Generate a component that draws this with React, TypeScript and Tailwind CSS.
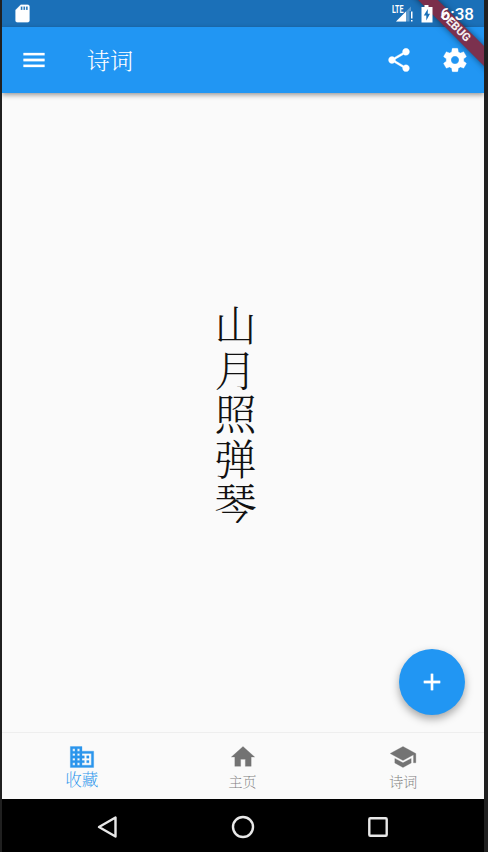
import React from "react";

const PATHS = {
  menu: "M3 18h18v-2H3v2zm0-5h18v-2H3v2zm0-7v2h18V6H3z",
  share:
    "M18 16.08c-.76 0-1.44.3-1.96.77L8.91 12.7c.05-.23.09-.46.09-.7s-.04-.47-.09-.7l7.05-4.11c.54.5 1.25.81 2.04.81 1.66 0 3-1.34 3-3s-1.34-3-3-3-3 1.34-3 3c0 .24.04.47.09.7L8.04 9.81C7.5 9.31 6.79 9 6 9c-1.66 0-3 1.34-3 3s1.34 3 3 3c.79 0 1.5-.31 2.04-.81l7.12 4.16c-.05.21-.08.43-.08.65 0 1.61 1.31 2.92 2.92 2.92s2.92-1.31 2.92-2.92-1.31-2.92-2.92-2.92z",
  settings:
    "M19.43 12.98c.04-.32.07-.64.07-.98s-.03-.66-.07-.98l2.11-1.65c.19-.15.24-.42.12-.64l-2-3.46c-.12-.22-.39-.3-.61-.22l-2.49 1c-.52-.4-1.08-.73-1.69-.98l-.38-2.65C14.46 2.18 14.25 2 14 2h-4c-.25 0-.46.18-.49.42l-.38 2.65c-.61.25-1.17.59-1.69.98l-2.49-1c-.23-.09-.49 0-.61.22l-2 3.46c-.13.22-.07.49.12.64l2.11 1.65c-.04.32-.07.65-.07.98s.03.66.07.98l-2.11 1.65c-.19.15-.24.42-.12.64l2 3.46c.12.22.39.3.61.22l2.49-1c.52.4 1.08.73 1.69.98l.38 2.65c.03.24.24.42.49.42h4c.25 0 .46-.18.49-.42l.38-2.65c.61-.25 1.17-.59 1.69-.98l2.49 1c.23.09.49 0 .61-.22l2-3.46c.12-.22.07-.49-.12-.64l-2.11-1.65zM12 15.5c-1.93 0-3.5-1.57-3.5-3.5s1.57-3.5 3.5-3.5 3.5 1.57 3.5 3.5-1.57 3.5-3.5 3.5z",
  add: "M19 13h-6v6h-2v-6H5v-2h6V5h2v6h6v2z",
  business:
    "M12 7V3H2v18h20V7H12zM6 19H4v-2h2v2zm0-4H4v-2h2v2zm0-4H4V9h2v2zm0-4H4V5h2v2zm4 12H8v-2h2v2zm0-4H8v-2h2v2zm0-4H8V9h2v2zm0-4H8V5h2v2zm10 12h-8v-2h2v-2h-2v-2h2v-2h-2V9h8v10zm-2-8h-2v2h2v-2zm0 4h-2v2h2v-2z",
  home: "M10 20v-6h4v6h5v-8h3L12 3 2 12h3v8z",
  school: "M5 13.18v4L12 21l7-3.82v-4L12 17l-7-3.82zM12 3L1 9l11 6 9-4.91V17h2V9L12 3z",
  sd: "M18 2h-8L4.02 8 4 20c0 1.1.9 2 2 2h12c1.1 0 2-.9 2-2V4c0-1.100-.9-2-2-2zm-6 6h-2V4h2v4zm3 0h-2V4h2v4zm3 0h-2V4h2v4z",
};

function Icon({ name, className }: { name: keyof typeof PATHS; className: string }) {
  return (
    <svg viewBox="0 0 24 24" fill="currentColor" stroke="currentColor" strokeWidth="0.25" className={className}>
      <path d={PATHS[name]} />
    </svg>
  );
}

function StatusBar() {
  return (
    <div className="flex h-[27px] shrink-0 items-center bg-[#1b70b8] pl-[10px] text-white">
      <Icon name="sd" className="h-[21px] w-[21px]" />
      <div className="relative z-30 ml-auto flex items-center pr-[10px]">
        <svg viewBox="0 0 22 20" className="h-5 w-[22px]">
          <path d="M4 17.500L19 2.500v15z" fill="#fff" fillOpacity=".3" />
          <path d="M4 17.500L14 7.500v10z" fill="#fff" />
          <path d="M17.500 7h3.500v12h-3.500z" fill="#1b70b8" />
          <path d="M19 7.500h1.500v7H19zm0 8.500h1.500v1.500H19z" fill="#fff" />
          <text x="0" y="8.500" fill="#fff" fontFamily="Roboto, sans-serif" fontSize="10.500" fontWeight="700" textLength="11.500" lengthAdjust="spacingAndGlyphs">
            LTE
          </text>
        </svg>
        <svg viewBox="0 0 12 18" className="mr-px ml-[7px] h-[18px] w-3">
          <path fill="#fff" d="M3.500 0h4v2H11.500v15.500H.5V2h3z" />
          <path fill="#1b70b8" d="M6.800 4L2.800 10.500h2.500V15.500L9 8.800H6.800z" />
        </svg>
        <span className="mt-px ml-[7px] font-[Roboto,sans-serif] text-[17px] leading-none font-medium">6:38</span>
      </div>
    </div>
  );
}

function Tab({ icon, label, active = false }: { icon: keyof typeof PATHS; label: string; active?: boolean }) {
  return (
    <div className={`flex flex-1 flex-col items-center pt-[10px] pr-px ${active ? "text-[#2b95ec]" : "text-[#737373]"}`}>
      <Icon name={icon} className="h-7 w-7" />
      <span
        className={
          active
            ? "-mt-[2px] text-[16.500px] leading-5 font-extralight"
            : "mt-px text-[14px] leading-[18px] font-extralight opacity-90"
        }
      >
        {label}
      </span>
    </div>
  );
}

export default function App() {
  return (
    <div className="h-[852px] w-[488px] bg-[#202020] pr-1 pl-0.5 font-['Noto_Serif_CJK_SC','Noto_Sans_CJK_SC',sans-serif]">
      <div className="relative flex h-full w-[482px] flex-col overflow-hidden bg-[#fafafa]">
        <StatusBar />
        <header className="z-10 flex h-[66px] shrink-0 items-center bg-[#2196f3] pr-[15px] pl-[18px] text-white shadow-[0_2px_5px_rgba(0,0,0,0.4)]">
          <Icon name="menu" className="h-7 w-7" />
          <h1 className="-mt-px ml-[39px] text-[23px] leading-none font-light">诗词</h1>
          <Icon name="share" className="ml-auto h-7 w-7" />
          <Icon name="settings" className="ml-7 h-7 w-7" />
        </header>

        <main className="flex flex-1 items-center justify-center pr-[15px]">
          <div className="flex flex-col text-[42px] leading-[44.500px] font-light text-[#111]">
            {"山月照弹琴".split("").map((c) => (
              <span key={c}>{c}</span>
            ))}
          </div>
        </main>

        <button className="absolute right-[19.500px] bottom-[137.500px] z-10 flex h-[66px] w-[66px] items-center justify-center rounded-full bg-[#2196f3] text-white shadow-[0_4px_9px_rgba(0,0,0,0.34)]">
          <Icon name="add" className="h-7 w-7" />
        </button>

        <nav className="flex h-[67px] shrink-0 border-t border-[#eeeeee] bg-[#fafafa]">
          <Tab icon="business" label="收藏" active />
          <Tab icon="home" label="主页" />
          <Tab icon="school" label="诗词" />
        </nav>

        <div className="flex h-[53px] shrink-0 items-center justify-between bg-black pt-[3px] pr-[93px] pl-[92px]">
          <svg viewBox="0 0 26 26" className="h-[26px] w-[26px]" fill="none" stroke="#e8e8e8" strokeWidth="2.400" strokeLinejoin="round">
            <path d="M5 13L21.500 3.500v19z" />
          </svg>
          <svg viewBox="0 0 26 26" className="h-[26px] w-[26px]" fill="none" stroke="#e8e8e8" strokeWidth="2.400">
            <circle cx="13" cy="13" r="10" />
          </svg>
          <svg viewBox="0 0 26 26" className="h-[26px] w-[26px]" fill="none" stroke="#e8e8e8" strokeWidth="2.400" strokeLinejoin="round">
            <rect x="4.300" y="4.300" width="17.400" height="17.400" rx="1" />
          </svg>
        </div>

        <div className="absolute top-[20.500px] -right-[32px] z-20 flex h-[14px] w-[120px] rotate-45 items-center justify-center bg-[#812b45]/95 pr-[2px] font-[Roboto,sans-serif] text-[11.500px] leading-none font-extrabold text-[#f3ecef] shadow-[0_0_6px_rgba(0,0,0,0.5)]">
          DEBUG
        </div>
      </div>
    </div>
  );
}
